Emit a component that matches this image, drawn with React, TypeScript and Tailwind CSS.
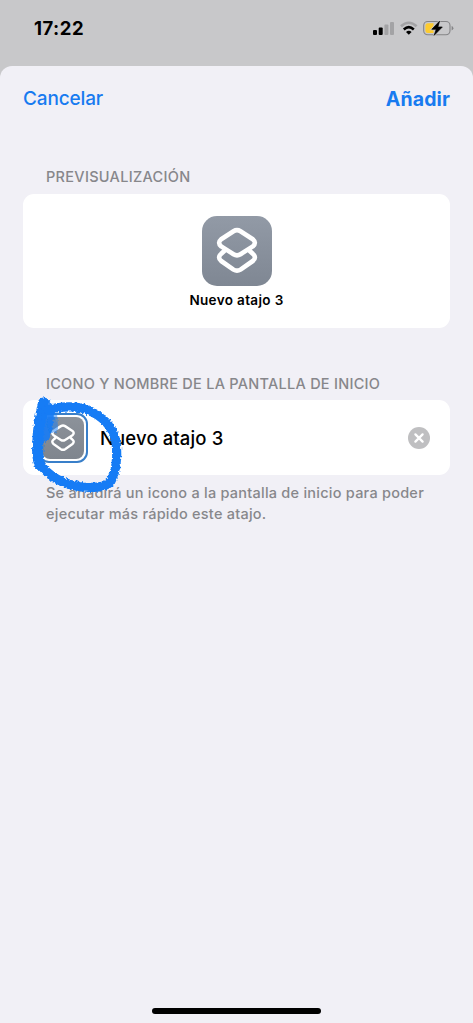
import React from "react";

function ShortcutGlyph({ className, stroke }: { className: string; stroke: number }) {
  return (
    <svg viewBox="0 0 70 70" className={className} fill="none" stroke="white" strokeWidth={stroke} strokeLinejoin="round" strokeLinecap="round">
      <path d="M31.5 15.2 Q35 13 38.5 15.2 L50.8 23.2 Q55 26.8 50.8 30.4 L38.5 38.2 Q35 40.4 31.5 38.2 L19.2 30.4 Q15 26.8 19.2 23.2 Z" />
      <path d="M22.2 35 L19.2 37.8 Q15 41.4 19.2 45 L31.5 53.6 Q35 55.8 38.5 53.6 L50.8 45 Q55 41.4 50.8 37.8 L47.8 35" />
    </svg>
  );
}

function StatusBar() {
  return (
    <div className="flex h-[66px] items-start justify-between bg-[#c8c8ca] pl-[34px] pr-[19px] pt-[18px]">
      <span className="text-[18.5px] font-bold leading-[21px] tracking-[0.5px] text-black">17:22</span>
      <svg width="82" height="22" viewBox="0 0 82 22">
        <rect x="1" y="12" width="4" height="5" rx="1" />
        <rect x="6.7" y="9.5" width="4" height="7.5" rx="1" />
        <rect x="12.4" y="6.5" width="4" height="10.5" rx="1" fill="#a3a3a5" />
        <rect x="18" y="4" width="4" height="13" rx="1" fill="#a3a3a5" />
        <path d="M29 8.3 Q36.8 1.2 44.6 8.3" fill="none" stroke="#a3a3a5" strokeWidth="2.6" />
        <path d="M31.8 11.4 Q36.8 7 41.8 11.4" fill="none" stroke="black" strokeWidth="2.6" />
        <path d="M34 13.9 Q36.8 11.7 39.6 13.9 L36.8 16.8 Z" />
        <rect x="51.7" y="3.5" width="26.3" height="13.2" rx="4" fill="none" stroke="#858587" strokeWidth="1.1" />
        <path d="M56 5.2 H61.5 V15 H56 Q53.4 15 53.4 12.5 V7.7 Q53.4 5.2 56 5.2 Z" fill="#fdcb2e" />
        <path d="M79.6 8 Q81.4 8.6 81.4 10.2 Q81.4 11.8 79.6 12.4 Z" fill="#858587" />
        <path d="M67.5 3.2 L59.8 11.3 H64.2 L62.2 17.3 L70.3 9 H65.9 Z" stroke="#c8c8ca" strokeWidth="2" />
        <path d="M67.5 3.2 L59.8 11.3 H64.2 L62.2 17.3 L70.3 9 H65.9 Z" stroke="black" strokeWidth="0.7" strokeLinejoin="round" />
      </svg>
    </div>
  );
}

function CrayonCircle() {
  return (
    <svg className="pointer-events-none absolute -left-[3px] -top-[15px]" width="120" height="120" viewBox="20 385 120 120">
      <defs>
        <filter id="crayon" x="-15%" y="-15%" width="130%" height="130%">
          <feTurbulence type="fractalNoise" baseFrequency="0.5" numOctaves="2" seed="4" result="noise" />
          <feDisplacementMap in="SourceGraphic" in2="noise" scale="4" xChannelSelector="R" yChannelSelector="G" result="rough" />
          <feGaussianBlur in="rough" stdDeviation="0.5" />
        </filter>
      </defs>
      <g fill="none" stroke="#147bf5" strokeLinecap="round" strokeLinejoin="round" filter="url(#crayon)">
        <path d="M43.5 403 C42 412 38.500 424 38 438 C37.500 450 37 458 40 465" strokeWidth="11" />
        <path d="M44 404 C49 407 49 420 44 436" strokeWidth="12" opacity="0.9" />
        <path d="M52 413 L53 428" strokeWidth="10" opacity="0.5" />
        <path d="M48 410 C60 406 80 405 92 412 C106 419 115 431 116.500 446 C117.500 460 116 472 111 481 C106 488 93 488 82 487 C67 485 54 479 46 471 C42 467 40 464 39 461" strokeWidth="9.200" />
      </g>
    </svg>
  );
}

export default function App() {
  return (
    <div className="h-[1023px] w-[473px] overflow-hidden bg-[#c8c8ca] font-['Inter','Liberation_Sans',sans-serif]">
      <StatusBar />
      <main className="flex h-[957px] flex-col rounded-t-[12px] bg-[#f1f0f6] px-[23px]">
        <header className="flex h-[64px] items-center justify-between pt-px text-[19px] leading-6 text-[#187bf0]">
          <button className="font-medium tracking-[-0.15px]">Cancelar</button>
          <button className="text-[19.5px] font-bold tracking-[0.1px]">Añadir</button>
        </header>
        <h2 className="mt-[37px] h-[27px] pl-[23px] text-[14.5px] font-medium leading-5 tracking-[0.3px] text-[#87878b]">PREVISUALIZACIÓN</h2>
        <section className="flex h-[134px] flex-col items-center rounded-[11px] bg-white pt-[22px]">
          <div className="size-[70px] rounded-[15px] bg-linear-to-b from-[#929aa6] to-[#7f8793]">
            <ShortcutGlyph className="size-full" stroke={4.6} />
          </div>
          <span className="mt-[5px] text-[13.5px] font-semibold leading-[18px] tracking-[0.35px] text-black">Nuevo atajo 3</span>
        </section>
        <h2 className="mt-[46px] h-[26px] pl-[23px] text-[14.5px] font-medium leading-5 tracking-[0.26px] text-[#87878b]">ICONO Y NOMBRE DE LA PANTALLA DE INICIO</h2>
        <section className="relative flex h-[75px] items-center rounded-[11px] bg-white pl-[15px] pr-5">
          <div className="size-[50px] rounded-[11px] border-2 border-[#397fc9] p-[2px]">
            <div className="size-full rounded-[8px] bg-linear-to-b from-[#8c929a] to-[#7f858e]">
              <ShortcutGlyph className="size-full" stroke={4} />
            </div>
          </div>
          <span className="ml-3 text-[18.5px] font-medium leading-6 tracking-[0.12px] text-black">Nuevo atajo 3</span>
          <svg className="ml-auto" width="22" height="22" viewBox="0 0 22 22">
            <circle cx="11" cy="11" r="11" fill="#bfbfc1" />
            <path d="M7.4 7.4 L14.6 14.6 M14.6 7.4 L7.4 14.6" stroke="white" strokeWidth="2.3" strokeLinecap="round" />
          </svg>
          <CrayonCircle />
        </section>
        <p className="mt-[7px] whitespace-nowrap pl-[23px] text-[14.5px] font-medium leading-[21px] tracking-[0.24px] text-[#87878b]">
          Se añadirá un icono a la pantalla de inicio para poder
          <br />
          ejecutar más rápido este atajo.
        </p>
        <div className="mb-[9px] mt-auto h-[6px] w-[169px] self-center rounded-full bg-black" />
      </main>
    </div>
  );
}
